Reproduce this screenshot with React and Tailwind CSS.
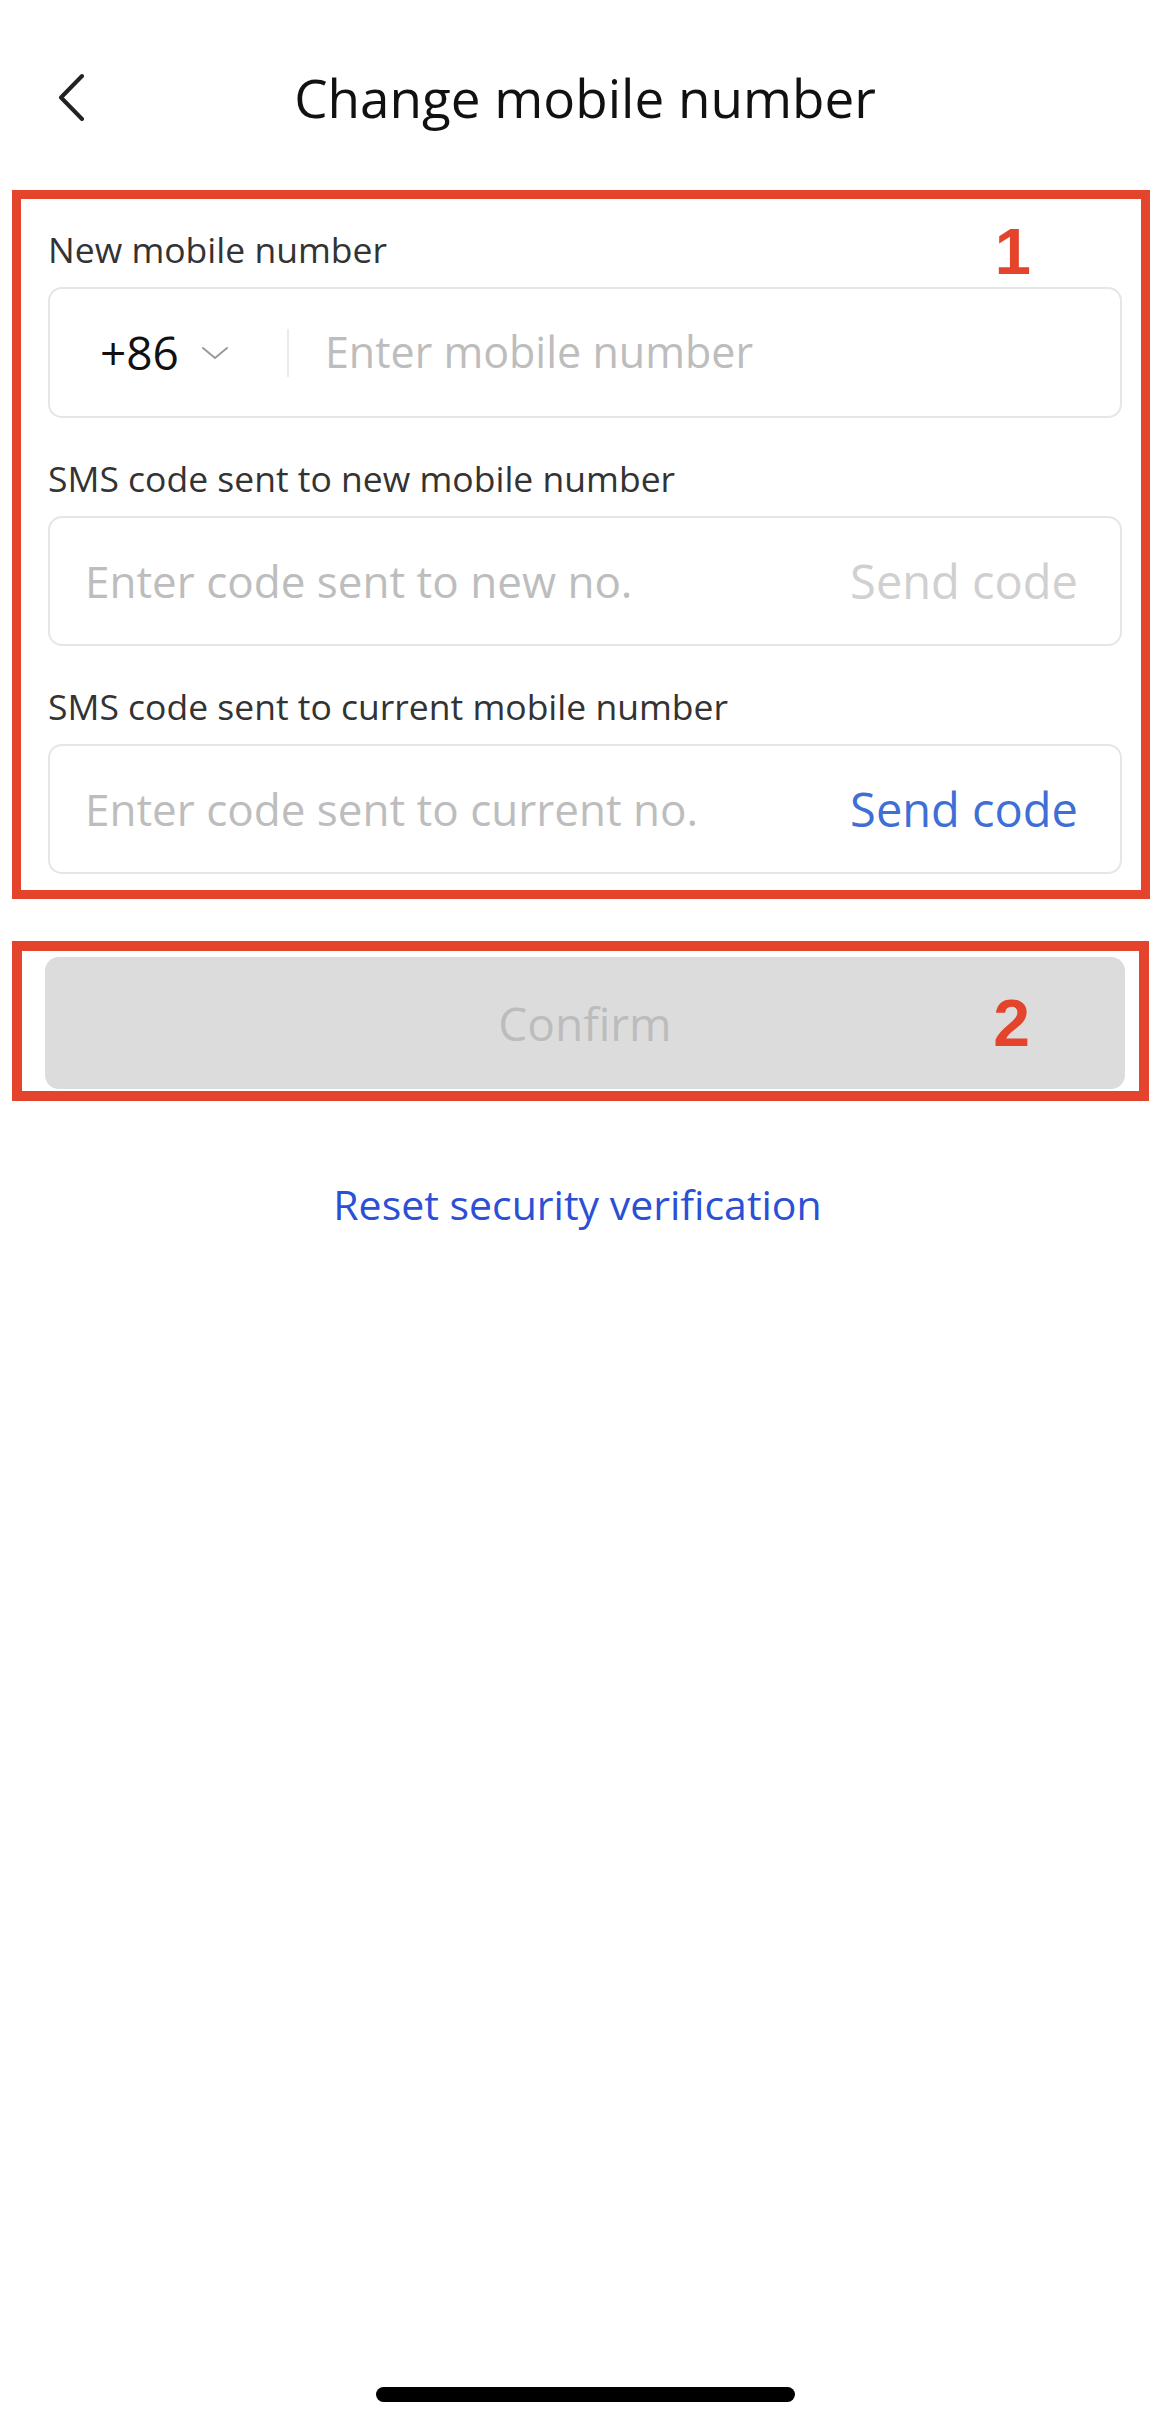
import React from 'react';

const Label = ({ children }) => (
  <div className="h-[44px] leading-[44px] text-[35.5px] text-[#333333]">{children}</div>
);

const ChevronDown = () => (
  <svg width="28" height="14" viewBox="0 0 28 14" fill="none">
    <path d="M2 2 L14 12 L26 2" stroke="#9a9a9a" strokeWidth="2" strokeLinecap="round" strokeLinejoin="round" />
  </svg>
);

const App = () => {
  return (
    <div className="min-h-[2426px] flex flex-col bg-white font-['Open_Sans',sans-serif]">
      {/* header */}
      <header className="mt-[57px] h-[80px] grid grid-cols-[1fr_auto_1fr] items-center">
        <button className="ml-[58px] w-[28px] h-[48px] justify-self-start">
          <svg width="28" height="48" viewBox="0 0 28 48" fill="none">
            <path d="M24 3 L3 24.5 L24 46" stroke="#222222" strokeWidth="4" strokeLinecap="round" strokeLinejoin="round" />
          </svg>
        </button>
        <h1 className="text-[53px] leading-none text-[#111111]">Change mobile number</h1>
        <div />
      </header>

      <div className="px-[48px]">
        {/* form section */}
        <div className="relative mt-[90px]">
          <div className="absolute top-[-37px] bottom-[-25px] left-[-36px] right-[-28px] border-[9px] border-[#e4442c] pointer-events-none" />
          <span className="absolute top-[-8px] right-[91px] text-[65px] leading-none font-bold text-[#e4442c] font-['Liberation_Sans',sans-serif]">1</span>

          <Label>New mobile number</Label>
          <div className="mt-[16px] h-[131px] rounded-[14px] border-2 border-[#e6e6e6] flex items-center">
            <span className="pl-[50px] text-[46px] text-[#111111]">+86</span>
            <span className="ml-[22px] flex items-center"><ChevronDown /></span>
            <span className="ml-[58px] w-[2px] h-[48px] bg-[#ebebeb]" />
            <input
              type="text"
              placeholder="Enter mobile number"
              className="ml-[36px] flex-1 min-w-0 bg-transparent outline-none text-[43px] text-[#111111] placeholder:text-[#bdbdbd]"
            />
          </div>

          <div className="mt-[38px]">
            <Label>SMS code sent to new mobile number</Label>
          </div>
          <div className="mt-[16px] h-[130px] rounded-[14px] border-2 border-[#e6e6e6] flex items-center pl-[35px] pr-[42px]">
            <input
              type="text"
              placeholder="Enter code sent to new no."
              className="flex-1 min-w-0 bg-transparent outline-none text-[44px] text-[#111111] placeholder:text-[#bdbdbd]"
            />
            <span className="text-[47px] text-[#d0d0d0]">Send code</span>
          </div>

          <div className="mt-[38px]">
            <Label>SMS code sent to current mobile number</Label>
          </div>
          <div className="mt-[16px] h-[130px] rounded-[14px] border-2 border-[#e6e6e6] flex items-center pl-[35px] pr-[42px]">
            <input
              type="text"
              placeholder="Enter code sent to current no."
              className="flex-1 min-w-0 bg-transparent outline-none text-[44px] text-[#111111] placeholder:text-[#bdbdbd]"
            />
            <span className="text-[47px] text-[#3d6fd6]">Send code</span>
          </div>
        </div>

        {/* confirm */}
        <div className="relative mt-[83px] mx-[-3px]">
          <div className="absolute top-[-16px] bottom-[-12px] left-[-33px] right-[-24px] border-[10px] border-[#e4442c] pointer-events-none" />
          <button
            disabled
            className="w-full h-[132px] rounded-[14px] bg-[#dcdcdc] text-[46px] text-[#bcbcbc]"
          >
            Confirm
          </button>
          <span className="absolute top-[33px] right-[95px] text-[66px] leading-none font-bold text-[#e4442c] font-['Liberation_Sans',sans-serif]">2</span>
        </div>

        <div className="mt-[90px] pr-[15px] text-center">
          <a className="text-[41px] leading-[50px] text-[#2b50d6]">Reset security verification</a>
        </div>
      </div>

      <div className="mt-auto mb-[24px] mx-auto w-[419px] h-[15px] rounded-full bg-black" />
    </div>
  );
};

export default App;
